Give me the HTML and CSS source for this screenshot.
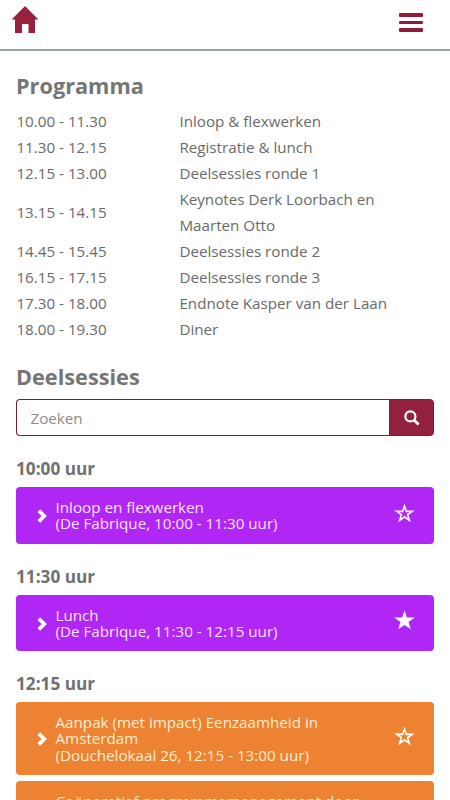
FILE: index.html
```html
<!DOCTYPE html>
<html lang="nl">
<head>
    <meta charset="UTF-8">
    <meta name="viewport" content="width=device-width, initial-scale=1.0">
    <title>Programma</title>
    <link rel="stylesheet" href="styles.css">
</head>
<body>
    <svg class="sprite" width="0" height="0">
        <symbol id="chevron" viewBox="0 0 10 14">
            <path d="M1.8 1.7 L7.2 7 L1.8 12.3" fill="none" stroke="currentColor" stroke-width="3.8"/>
        </symbol>
        <symbol id="star" viewBox="0 0 22 20">
            <path d="M11 0 L13.5 7.3 L21.8 7.3 L15.2 12 L17.6 19.8 L11 15.2 L4.4 19.8 L6.8 12 L0.2 7.3 L8.5 7.3 Z" fill="currentColor"/>
        </symbol>
        <symbol id="star-open" viewBox="0 0 22 20">
            <path d="M11 0 L13.5 7.3 L21.8 7.3 L15.2 12 L17.6 19.8 L11 15.2 L4.4 19.8 L6.8 12 L0.2 7.3 L8.5 7.3 Z M11 5.2 L9.7 9.1 L5.6 9.1 L8.8 11.4 L7.5 15.5 L11 13 L14.5 15.5 L13.2 11.4 L16.4 9.1 L12.3 9.1 Z" fill="currentColor" fill-rule="evenodd"/>
        </symbol>
    </svg>

    <header class="navbar">
        <a class="home" href="#" aria-label="Home">
            <svg width="28" height="27" viewBox="0 0 28 27">
                <path d="M14 0 L27.5 13.5 L24 13.5 L24 27 L17.5 27 L17.5 18 L11 18 L11 27 L4 27 L4 13.5 L0.5 13.5 Z" fill="currentColor"/>
            </svg>
        </a>
        <button type="button" class="menu" aria-label="Menu">
            <span></span>
            <span></span>
            <span></span>
        </button>
    </header>

    <main class="content">
        <h2>Programma</h2>
        <table class="schedule">
            <tr><td>10.00 - 11.30</td><td>Inloop &amp; flexwerken</td></tr>
            <tr><td>11.30 - 12.15</td><td>Registratie &amp; lunch</td></tr>
            <tr><td>12.15 - 13.00</td><td>Deelsessies ronde 1</td></tr>
            <tr><td>13.15 - 14.15</td><td>Keynotes Derk Loorbach en Maarten Otto</td></tr>
            <tr><td>14.45 - 15.45</td><td>Deelsessies ronde 2</td></tr>
            <tr><td>16.15 - 17.15</td><td>Deelsessies ronde 3</td></tr>
            <tr><td>17.30 - 18.00</td><td>Endnote Kasper van der Laan</td></tr>
            <tr><td>18.00 - 19.30</td><td>Diner</td></tr>
        </table>

        <h2 class="sessions-title">Deelsessies</h2>
        <form class="search">
            <input type="text" placeholder="Zoeken">
            <button type="button" aria-label="Zoeken">
                <svg width="16" height="16" viewBox="0 0 16 16">
                    <circle cx="6.4" cy="6.4" r="5" fill="none" stroke="currentColor" stroke-width="2.2"/>
                    <path d="M10 10 L14.6 14.6" stroke="currentColor" stroke-width="2.8"/>
                </svg>
            </button>
        </form>

        <h3>10:00 uur</h3>
        <div class="session purple">
            <svg class="chevron"><use href="#chevron"/></svg>
            <p>Inloop en flexwerken<br>(De Fabrique, 10:00 - 11:30 uur)</p>
            <svg class="star"><use href="#star-open"/></svg>
        </div>

        <h3>11:30 uur</h3>
        <div class="session purple">
            <svg class="chevron"><use href="#chevron"/></svg>
            <p>Lunch<br>(De Fabrique, 11:30 - 12:15 uur)</p>
            <svg class="star"><use href="#star"/></svg>
        </div>

        <h3>12:15 uur</h3>
        <div class="session orange">
            <svg class="chevron"><use href="#chevron"/></svg>
            <p>Aanpak (met impact) Eenzaamheid in Amsterdam<br>(Douchelokaal 26, 12:15 - 13:00 uur)</p>
            <svg class="star"><use href="#star-open"/></svg>
        </div>
        <div class="session orange tall">
            <svg class="chevron"><use href="#chevron"/></svg>
            <p>Coöperatief programmamanagement door</p>
            <svg class="star"><use href="#star-open"/></svg>
        </div>
    </main>
</body>
</html>
```

FILE: styles.css
```css
* {
    box-sizing: border-box;
}

body {
    margin: 0;
    height: 800px;
    overflow: hidden;
    background-color: #fff;
    color: #6a6a6a;
    font-family: "Open Sans", sans-serif;
    font-size: 15.2px;
    font-weight: 400;
}

.sprite {
    display: block;
}

.navbar {
    display: flex;
    justify-content: space-between;
    align-items: flex-start;
    height: 51px;
    padding: 6px 27px 0 11px;
    border-bottom: 2px solid #93a4ad;
}

.home {
    color: #98213e;
}

.home svg {
    display: block;
}

.menu {
    display: flex;
    flex-direction: column;
    gap: 4px;
    margin-top: 7px;
    padding: 0;
    border: none;
    background: none;
}

.menu span {
    width: 24px;
    height: 3.5px;
    border-radius: 1px;
    background-color: #8c1c3a;
}

.content {
    padding: 19px 16px 0;
}

h2 {
    margin: 0 0 6px;
    font-size: 21.7px;
    font-weight: 700;
    line-height: 32px;
    color: #757575;
}

h3 {
    margin: 19px 0 6px;
    padding-top: 1px;
    font-size: 17.2px;
    font-weight: 700;
    line-height: 25px;
    color: #707070;
}

.schedule {
    width: 100%;
    border-collapse: collapse;
    line-height: 26px;
}

.schedule td {
    padding: 0 0 0 0.4px;
}

.schedule td:first-child {
    width: 163px;
}

.schedule td:last-child {
    padding-right: 30px;
}

.sessions-title {
    margin: 19px 0 6px;
}

.search {
    display: flex;
    height: 37px;
    margin-bottom: 19px;
}

.search input {
    flex: 1;
    min-width: 0;
    padding: 0 13.5px;
    border: 1px solid #6d2038;
    border-right: none;
    border-radius: 4px 0 0 4px;
    font: inherit;
}

.search input::placeholder {
    color: #8c8c8c;
}

.search button {
    display: flex;
    justify-content: center;
    align-items: center;
    width: 45px;
    padding: 0;
    border: 1px solid #7c1b34;
    border-radius: 0 4px 4px 0;
    background-color: #93213e;
    color: #fff;
}

.session {
    display: flex;
    align-items: center;
    margin-bottom: 6px;
    padding: 12px 19px 12px 21px;
    border-radius: 4px;
    color: #fbe3fb;
    line-height: 16.25px;
}

.session p {
    flex: 1;
    align-self: flex-start;
    margin: 0 20px 0 8.5px;
}

.purple {
    background-color: #b026f5;
}

.orange {
    background-color: #ed8233;
    color: #fdeed0;
}

.tall {
    min-height: 73px;
}

.chevron {
    width: 10px;
    height: 14px;
    margin-top: 2px;
    color: #fff;
}

.star {
    width: 21px;
    height: 20px;
    margin-bottom: 5px;
    color: #fff;
}
```
